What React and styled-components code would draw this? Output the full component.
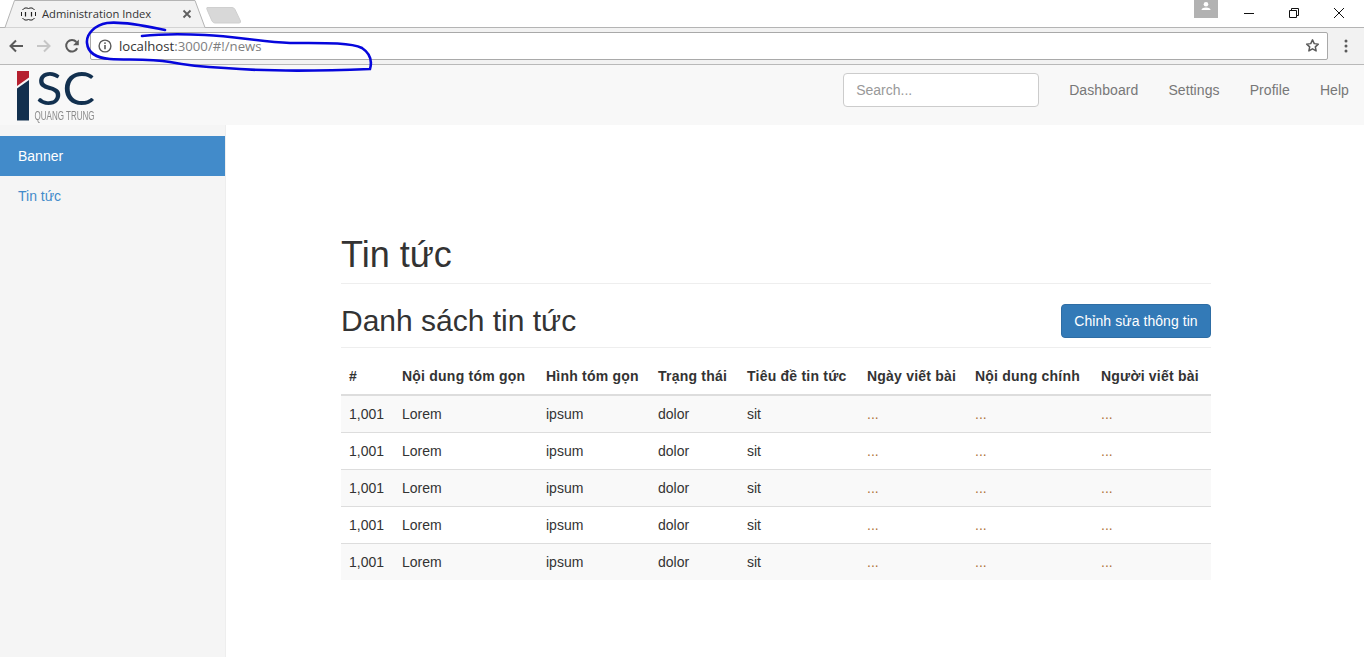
import React from "react";
import styled, { createGlobalStyle } from "styled-components";

const GlobalStyle = createGlobalStyle`
  * { box-sizing: border-box; }
  html, body { margin: 0; padding: 0; background: #fff; }
  body {
    font-family: "Liberation Sans", Arial, sans-serif;
    font-size: 14px;
    line-height: 20px;
    color: #333;
  }
`;

const Page = styled.div`
  position: relative;
  width: 1364px;
  height: 657px;
  overflow: hidden;
  display: flex;
  flex-direction: column;
`;

/* browser chrome */
const TabStrip = styled.div`
  height: 28px;
  display: flex;
  align-items: flex-start;
  justify-content: space-between;
  background: #fff;
  border-bottom: 1px solid #b4b4b4;
`;
const TabGroup = styled.div`
  display: flex;
  align-items: flex-start;
`;
const Tab = styled.div`
  position: relative;
  width: 206px;
  height: 28px;
  display: flex;
  align-items: center;
  padding: 0 14px 0 21px;
  font-family: "Open Sans", sans-serif;
  font-size: 11.2px;
  color: #333;
`;
const TabShape = styled.svg`
  position: absolute;
  left: 0;
  top: 0;
`;
const TabFavicon = styled.svg`
  position: relative;
  flex: none;
  margin-right: 6px;
`;
const TabTitle = styled.span`
  position: relative;
  flex: 1;
  white-space: nowrap;
`;
const TabClose = styled.svg`
  position: relative;
  flex: none;
`;
const NewTab = styled.svg`
  margin: 6px 0 0 0;
`;
const WindowControls = styled.div`
  display: flex;
  align-items: flex-start;
  padding-right: 3px;
`;
const Avatar = styled.div`
  width: 24px;
  height: 18px;
  background: #b2b2b2;
  display: flex;
  justify-content: center;
  margin-right: 8px;
`;
const WindowButton = styled.div`
  width: 45px;
  height: 25px;
  display: flex;
  align-items: center;
  justify-content: center;
`;
const Toolbar = styled.div`
  height: 37px;
  display: flex;
  align-items: center;
  background: #f2f2f2;
  border-bottom: 1px solid #b9b9b9;
  padding: 0 0 1px 0;
`;
const ToolButton = styled.div`
  width: 28px;
  height: 24px;
  display: flex;
  align-items: center;
  justify-content: center;
  flex: none;
  margin-left: ${(props) => props.$left || 0}px;
  margin-right: ${(props) => props.$right || 0}px;
`;
const Omnibox = styled.div`
  flex: 1;
  height: 28px;
  margin: 0 4px 0 4px;
  display: flex;
  align-items: center;
  background: #fff;
  border: 1px solid #a9a9a9;
  border-radius: 2px;
  padding: 0 7px 0 7px;
`;
const UrlText = styled.div`
  flex: 1;
  margin-left: 7px;
  font-family: "Open Sans", sans-serif;
  font-size: 13.2px;
  color: #333;
`;
const UrlMuted = styled.span`
  color: #808080;
`;

/* site navbar */
const Navbar = styled.div`
  height: 60px;
  flex: none;
  display: flex;
  align-items: flex-start;
  justify-content: space-between;
  background: #f8f8f8;
`;
const Logo = styled.svg`
  margin: 5px 0 0 16px;
  overflow: visible;
  filter: blur(0.3px);
`;
const NavRight = styled.div`
  display: flex;
  align-items: center;
  height: 50px;
`;
const SearchInput = styled.input`
  width: 196px;
  height: 34px;
  margin-right: 15px;
  padding: 6px 12px;
  background: #fff;
  border: 1px solid #ccc;
  border-radius: 4px;
  font-family: inherit;
  font-size: 14px;
  color: #555;
  &::placeholder { color: #999; opacity: 1; }
`;
const NavLink = styled.a`
  padding: 15px;
  color: #777;
  letter-spacing: 0.08px;
`;

/* page body */
const Body = styled.div`
  flex: 1;
  display: flex;
  min-height: 0;
`;
const Sidebar = styled.nav`
  width: 226px;
  flex: none;
  padding-top: 11px;
  background: #f5f5f5;
  border-right: 1px solid #eee;
`;
const SideItem = styled.a`
  display: block;
  height: 40px;
  padding: 10px 18px;
  color: ${(props) => (props.$active ? "#fff" : "#428bca")};
  background: ${(props) => (props.$active ? "#428bca" : "transparent")};
`;
const Main = styled.main`
  flex: 1;
  padding: 110px 153px 0 115px;
`;
const PageHeader = styled.div`
  padding-bottom: 8px;
  border-bottom: 1px solid #eee;
`;
const Title = styled.h1`
  margin: 0;
  font-size: 36px;
  font-weight: 500;
  line-height: 40px;
`;
const SectionHeader = styled.div`
  display: flex;
  align-items: flex-start;
  justify-content: space-between;
  height: 64px;
  padding-top: 20px;
  border-bottom: 1px solid #eee;
`;
const SectionTitle = styled.h2`
  margin: 0;
  font-size: 30px;
  font-weight: 500;
  line-height: 33px;
`;
const EditButton = styled.button`
  width: 150px;
  height: 34px;
  padding: 0;
  background: #337ab7;
  border: 1px solid #2e6da4;
  border-radius: 4px;
  font-family: inherit;
  font-size: 14px;
  letter-spacing: 0.06px;
  color: #fff;
`;
const Table = styled.table`
  width: 870px;
  margin-top: 10px;
  border-collapse: collapse;
  table-layout: fixed;
`;
const Th = styled.th`
  padding: 8px;
  text-align: left;
  font-weight: 700;
  line-height: 20px;
  letter-spacing: 0.22px;
  white-space: nowrap;
  border-bottom: 2px solid #ddd;
`;
const Row = styled.tr`
  background: ${(props) => (props.$striped ? "#f9f9f9" : "#fff")};
`;
const Td = styled.td`
  padding: 8px;
  line-height: 20px;
  border-top: 1px solid #ddd;
  color: ${(props) => (props.$dots ? "#b0733c" : "#333")};
`;
const Scribble = styled.svg`
  position: absolute;
  left: 0;
  top: 0;
  pointer-events: none;
`;

const columns = [
  { label: "#", width: 53 },
  { label: "Nội dung tóm gọn", width: 144 },
  { label: "Hình tóm gọn", width: 112 },
  { label: "Trạng thái", width: 89 },
  { label: "Tiêu đề tin tức", width: 120 },
  { label: "Ngày viết bài", width: 108 },
  { label: "Nội dung chính", width: 126 },
  { label: "Người viết bài", width: 118 },
];
const cells = ["1,001", "Lorem", "ipsum", "dolor", "sit", "...", "...", "..."];

const App = () => {
  return (
    <Page>
      <GlobalStyle />
      <TabStrip>
        <TabGroup>
          <Tab>
            <TabShape width="206" height="28" viewBox="0 0 206 28">
              <path d="M0 27.5 H5 L14.5 0.5 H195 L205 27.5" fill="#f2f2f2" stroke="#b4b4b4" />
            </TabShape>
            <TabFavicon width="15" height="14" viewBox="0 0 15 14">
              <path
                d="M1.5 3 Q2.5 1.5 4 1 H6 Q7.5 2 9 1 H11 Q12.5 1.5 13.5 3 M0.5 5v4 M14.5 5v4 M1.5 11 Q2.5 12.5 4 13 H6 Q7.5 12 9 13 H11 Q12.5 12.5 13.5 11"
                fill="none"
                stroke="#222"
              />
              <path d="M4.5 5v4.5M10.5 5v4.5" stroke="#222" strokeWidth="1.2" />
            </TabFavicon>
            <TabTitle>Administration Index</TabTitle>
            <TabClose width="10" height="10" viewBox="0 0 10 10">
              <path d="M1.5 1.5l7 7M8.5 1.5l-7 7" stroke="#5f5f5f" strokeWidth="1.8" />
            </TabClose>
          </Tab>
          <NewTab width="36" height="18" viewBox="0 0 36 18">
            <path d="M1 1.5 H26 Q28 1.5 29 3.5 L34.5 15 Q35 17 33 17 H9 Q7 17 6 15 L1 3.5 Q0.5 1.5 1 1.5Z" fill="#d8d8d8" stroke="#cfcfcf" />
          </NewTab>
        </TabGroup>
        <WindowControls>
          <Avatar>
            <svg width="12" height="12" viewBox="0 0 12 12">
              <circle cx="6" cy="4.2" r="2.3" fill="#fff" />
              <path d="M1.5 10 Q1.5 7.4 6 7.4 Q10.5 7.4 10.5 10Z" fill="#fff" />
            </svg>
          </Avatar>
          <WindowButton>
            <svg width="10" height="10" viewBox="0 0 10 10"><path d="M0 5.5h10" stroke="#111" /></svg>
          </WindowButton>
          <WindowButton>
            <svg width="10" height="10" viewBox="0 0 10 10">
              <path d="M0.5 2.5h7v7h-7zM2.5 2.5v-2h7v7h-2" fill="none" stroke="#111" />
            </svg>
          </WindowButton>
          <WindowButton>
            <svg width="12" height="12" viewBox="0 0 12 12"><path d="M1 1l10 10M11 1L1 11" stroke="#111" /></svg>
          </WindowButton>
        </WindowControls>
      </TabStrip>

      <Toolbar>
        <ToolButton $left={2}>
          <svg width="16" height="16" viewBox="0 0 16 16">
            <path d="M15 8H2.5M8 2.5L2.5 8 8 13.5" fill="none" stroke="#5a5a5a" strokeWidth="2" />
          </svg>
        </ToolButton>
        <ToolButton>
          <svg width="16" height="16" viewBox="0 0 16 16">
            <path d="M1 8h12.5M8 2.5L13.5 8 8 13.5" fill="none" stroke="#c6c6c6" strokeWidth="2" />
          </svg>
        </ToolButton>
        <ToolButton>
          <svg width="16" height="16" viewBox="0 0 16 16">
            <path d="M13.2 10.3A5.8 5.8 0 1 1 12.4 4" fill="none" stroke="#5a5a5a" strokeWidth="2" />
            <path d="M14.8 1.5v5.7H9.1z" fill="#5a5a5a" />
          </svg>
        </ToolButton>
        <Omnibox>
          <svg width="14" height="14" viewBox="0 0 14 14">
            <circle cx="7" cy="7" r="5.9" fill="none" stroke="#5a5a5a" strokeWidth="1.4" />
            <path d="M7 6v4.2" stroke="#5a5a5a" strokeWidth="1.6" />
            <circle cx="7" cy="4.1" r="0.95" fill="#5a5a5a" />
          </svg>
          <UrlText>
            localhost<UrlMuted>:3000/#!/news</UrlMuted>
          </UrlText>
          <svg width="15" height="15" viewBox="0 0 24 24">
            <path d="M12 3l2.8 6 6.5.8-4.8 4.4 1.3 6.5L12 17.4l-5.8 3.3 1.3-6.5L2.7 9.8 9.2 9z" fill="none" stroke="#5a5a5a" strokeWidth="2.4" strokeLinejoin="round" />
          </svg>
        </Omnibox>
        <ToolButton $right={4}>
          <svg width="4" height="14" viewBox="0 0 4 14">
            <circle cx="2" cy="2" r="1.5" fill="#5a5a5a" />
            <circle cx="2" cy="7" r="1.5" fill="#5a5a5a" />
            <circle cx="2" cy="12" r="1.5" fill="#5a5a5a" />
          </svg>
        </ToolButton>
      </Toolbar>

      <Navbar>
        <Logo width="80" height="52" viewBox="0 0 80 52">
          <path d="M1 1h12v6.5L1 16z" fill="#b5202f" />
          <path d="M1 18.5L13 10v40.5H1z" fill="#12304f" />
          <text x="20" y="35" fontFamily="Lato, sans-serif" fontSize="47" fontWeight="400" fill="#12304f" textLength="59" lengthAdjust="spacingAndGlyphs">SC</text>
          <text x="18.5" y="50" fontFamily="'Liberation Sans', sans-serif" fontSize="12.5" fill="#8a8a8a" textLength="60" lengthAdjust="spacingAndGlyphs">QUANG TRUNG</text>
        </Logo>
        <NavRight>
          <SearchInput placeholder="Search..." />
          <NavLink>Dashboard</NavLink>
          <NavLink>Settings</NavLink>
          <NavLink>Profile</NavLink>
          <NavLink>Help</NavLink>
        </NavRight>
      </Navbar>

      <Body>
        <Sidebar>
          <SideItem $active>Banner</SideItem>
          <SideItem>Tin tức</SideItem>
        </Sidebar>
        <Main>
          <PageHeader>
            <Title>Tin tức</Title>
          </PageHeader>
          <SectionHeader>
            <SectionTitle>Danh sách tin tức</SectionTitle>
            <EditButton>Chỉnh sửa thông tin</EditButton>
          </SectionHeader>
          <Table>
            <colgroup>
              {columns.map((col) => (
                <col key={col.label} width={col.width} />
              ))}
            </colgroup>
            <thead>
              <tr>
                {columns.map((col) => (
                  <Th key={col.label}>{col.label}</Th>
                ))}
              </tr>
            </thead>
            <tbody>
              {[0, 1, 2, 3, 4].map((row) => (
                <Row key={row} $striped={row % 2 === 0}>
                  {cells.map((text, i) => (
                    <Td key={i} $dots={text === "..."}>{text}</Td>
                  ))}
                </Row>
              ))}
            </tbody>
          </Table>
        </Main>
      </Body>

      <Scribble width="1364" height="657" viewBox="0 0 1364 657">
        <path
          d="M165 30 C150 27 125 21 107 23 C95 25 86 34 87 43 C88 53 96 58 110 59 C130 60 150 59 170 62 C190 66 205 67 225 68 C260 71 320 71 370 69 C372 62 371 54 362 48 C350 42 320 43 290 43 C260 42 235 36 205 35 C185 34 160 34 142 36"
          fill="none"
          stroke="#0606dc"
          strokeWidth="2.6"
          strokeLinecap="round"
        />
      </Scribble>
    </Page>
  );
};

export default App;
